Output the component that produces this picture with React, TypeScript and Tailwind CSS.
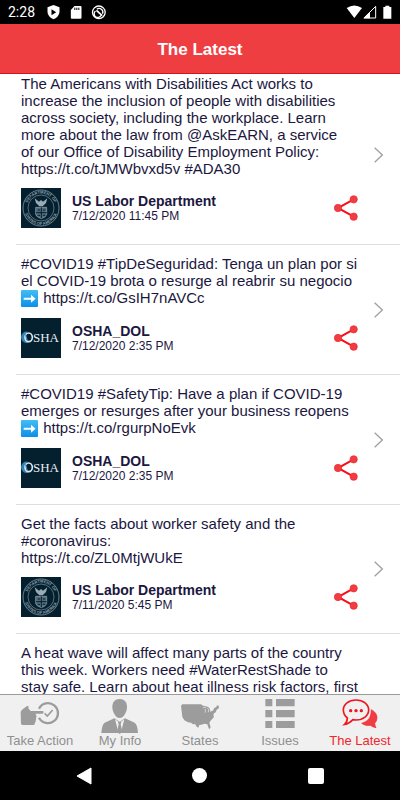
import React, { useState } from "react";

type Author = "dol" | "osha";

interface Post {
  id: number;
  text: string;
  link?: string;
  author?: Author;
  date?: string;
}

const posts: Post[] = [
  {
    id: 1,
    text: "The Americans with Disabilities Act works to increase the inclusion of people with disabilities across society, including the workplace. Learn more about the law from @AskEARN, a service\nof our Office of Disability Employment Policy: https://t.co/tJMWbvxd5v #ADA30",
    author: "dol",
    date: "7/12/2020 11:45 PM",
  },
  {
    id: 2,
    text: "#COVID19 #TipDeSeguridad: Tenga un plan por si el COVID-19 brota o resurge al reabrir su negocio",
    link: "https://t.co/GsIH7nAVCc",
    author: "osha",
    date: "7/12/2020 2:35 PM",
  },
  {
    id: 3,
    text: "#COVID19 #SafetyTip: Have a plan if COVID-19 emerges or resurges after your business reopens",
    link: "https://t.co/rgurpNoEvk",
    author: "osha",
    date: "7/12/2020 2:35 PM",
  },
  {
    id: 4,
    text: "Get the facts about worker safety and the #coronavirus:\nhttps://t.co/ZL0MtjWUkE",
    author: "dol",
    date: "7/11/2020 5:45 PM",
  },
  {
    id: 5,
    text: "A heat wave will affect many parts of the country this week. Workers need #WaterRestShade to\nstay safe. Learn about heat illness risk factors, first",
  },
];

const authorNames: Record<Author, string> = {
  dol: "US Labor Department",
  osha: "OSHA_DOL",
};

const DolSeal = () => (
  <svg viewBox="0 0 120 120" className="size-10 shrink-0" aria-hidden="true">
    <defs>
      <path id="sealTop" d="M17 60a43 43 0 0 1 86 0" />
      <path id="sealBottom" d="M9 60a51 51 0 0 0 102 0" />
    </defs>
    <rect width="120" height="120" fill="#04202f" />
    <g fill="none" stroke="#8195a3">
      <circle cx="60" cy="60" r="54" strokeWidth="2.5" />
      <circle cx="60" cy="60" r="39" strokeWidth="2" />
    </g>
    <g fill="#8fa1ad" fontFamily="Liberation Sans, sans-serif" fontSize="12" fontWeight="700">
      <text textAnchor="middle">
        <textPath href="#sealTop" startOffset="50%">DEPARTMENT OF</textPath>
      </text>
      <text textAnchor="middle">
        <textPath href="#sealBottom" startOffset="50%">STATES OF AMERICA</textPath>
      </text>
    </g>
    <path d="M41 31l13 10 6-5 6 5 13-10-4 14-10 10h-10l-10-10z" fill="#9aabb6" />
    <path d="M44 58h33v21q-2 9-16 13-15-4-17-13z" fill="#506a7a" stroke="#9aabb6" strokeWidth="2" />
    <path d="M61 58v33M45 74h32M50 66h7M66 66h7M50 82h7M66 82h7" stroke="#04202f" strokeWidth="3" fill="none" />
  </svg>
);

const OshaLogo = () => (
  <svg viewBox="0 0 120 120" className="size-10 shrink-0" aria-hidden="true">
    <rect width="120" height="120" fill="#04202f" />
    <path d="M20 41a17 17 0 1 0 2 33 21 21 0 0 1-2-33z" fill="#2f83b5" />
    <ellipse cx="23" cy="58" rx="11" ry="13" fill="none" stroke="#dbe6ed" strokeWidth="5" />
    <path d="M12 46l7 22" stroke="#5b9cc2" strokeWidth="3" />
    <text x="36" y="72" fill="#e8edf0" fontFamily="Liberation Serif, serif" fontSize="39">
      SHA
    </text>
  </svg>
);

const ArrowEmoji = () => (
  <svg viewBox="0 0 51 51" className="mr-px inline-block size-[17px] align-[-4px]" role="img" aria-label="right arrow">
    <defs>
      <linearGradient id="arrowBg" x1="0" y1="0" x2="0" y2="1">
        <stop offset="0" stopColor="#42bdf5" />
        <stop offset="1" stopColor="#0c8fe8" />
      </linearGradient>
    </defs>
    <rect width="51" height="51" rx="3" fill="url(#arrowBg)" />
    <path d="M8 23h22v-9l14 12-14 12v-9H8z" fill="#fff" />
  </svg>
);

const ShareIcon = () => (
  <svg viewBox="0 0 72 78" className="h-[26px] w-6" aria-hidden="true">
    <path d="M59 13L12 39l47 26" fill="none" stroke="#f80f19" strokeWidth="6" />
    <g fill="#ef3e42" stroke="#f5222c" strokeWidth="2">
      <circle cx="59" cy="13" r="11" />
      <circle cx="12" cy="39" r="11" />
      <circle cx="59" cy="65" r="11" />
    </g>
  </svg>
);

const TakeActionIcon = () => (
  <svg viewBox="60 24 120 108" className="h-9 w-10" aria-hidden="true">
    <path d="M117 56a30 30 0 1 1 0 27" fill="none" stroke="#9c9c9c" strokeWidth="7" />
    <path d="M134 70l8 8 16-18" fill="none" stroke="#9c9c9c" strokeWidth="5" />
    <path
      d="M62 66q1-5 7-9l11-8q5-3 6 1l-1 5 7 8h35q4 0 4 4t-4 4h-20l1 4q4 3 0 8q2 4-1 8q2 3-2 7q0 7-5 7H70q-7 0-7-4z"
      fill="#9c9c9c"
    />
  </svg>
);

const MyInfoIcon = () => (
  <svg viewBox="300 24 120 108" className="h-9 w-10" aria-hidden="true">
    <path
      d="M359 27c14 0 22 9 22 24 0 13-7 24-12 29q-10 8-20 0c-5-5-12-16-12-29 0-15 8-24 22-24z"
      fill="#9c9c9c"
    />
    <path d="M304 129q2-27 10-31l29-13 16 10 16-10 29 13q8 4 10 31z" fill="#9c9c9c" />
    <path d="M345 88l9 34 5-25 5 25 9-34-14 10z" fill="#f0f0f0" />
    <path d="M354 96h10l-2 7 5 22-8 7-8-7 5-22z" fill="#9c9c9c" />
  </svg>
);

const StatesIcon = () => (
  <svg viewBox="150 24 120 108" className="h-9 w-10" aria-hidden="true">
    <path
      d="M153 47l4-4h56l6 4 9 2 8 3 4 6 1 7 9-4 2-6 7-4 2-5 5 1 1 7-7 5-3 8-5 3-2 6 2 5-9 10-5 7 4 14-3 5-3-2-4-12-9-2-9 3-6 1-3 8-5-3-5-8-6 1-6-5-9-1-11-6-6-10-2-17z"
      fill="#9c9c9c"
    />
    <path d="M219 53l9-1M226 57v11M232 55l4 3-1 9" stroke="#f0f0f0" strokeWidth="2" fill="none" />
  </svg>
);

const IssuesIcon = () => (
  <svg viewBox="-15 24 120 108" className="h-9 w-10" aria-hidden="true">
    <g fill="#9c9c9c">
      <path d="M1 27h21v22H1zM1 60h21v22H1zM1 93h21v21H1z" />
      <path d="M33 27h56v22H33zM33 60h56v22H33zM33 93h56v21H33z" />
    </g>
  </svg>
);

const LatestIcon = () => (
  <svg viewBox="225 24 120 108" className="h-9 w-10" aria-hidden="true">
    <path
      d="M319 59q17 9 17 25 0 9-7 16 1 9 4 13-11-2-17-7-15 3-26-6 23-7 27-25 2-8 2-16z"
      fill="#ef3e42"
      stroke="#f5222c"
      strokeWidth="2"
    />
    <path
      d="M273 30c22 0 38 13 38 30s-16 30-38 30q-5 0-10-1-10 12-24 14 8-7 8-19-12-10-12-24c0-17 16-30 38-30z"
      fill="#f0f0f0"
      stroke="#f0151f"
      strokeWidth="5"
    />
    <g fill="#f0151f">
      <circle cx="257" cy="62" r="5" />
      <circle cx="273" cy="62" r="5" />
      <circle cx="289" cy="62" r="5" />
    </g>
  </svg>
);

const tabs = [
  { label: "Take Action", icon: <TakeActionIcon /> },
  { label: "My Info", icon: <MyInfoIcon /> },
  { label: "States", icon: <StatesIcon /> },
  { label: "Issues", icon: <IssuesIcon /> },
  { label: "The Latest", icon: <LatestIcon /> },
];

const StatusBar = () => (
  <div className="flex h-6 shrink-0 items-center bg-black px-2 text-white">
    <span className="font-[Roboto,sans-serif] text-sm">2:28</span>
    <svg viewBox="140 12 185 48" className="ml-[11px] h-4 w-[62px]" aria-hidden="true">
      <path d="M162 15l18 7v14q-1 15-18 22-17-7-18-22V22z" fill="#fff" />
      <path d="M156 28v18l14-9z" fill="#000" />
      <path d="M225 18h18q3 0 3 3v32q0 3-3 3h-26q-3 0-3-3V30z" fill="#fff" />
      <path d="M226 23v7M232 23v7M238 23v7" stroke="#000" strokeWidth="3" />
      <circle cx="298" cy="37" r="19" fill="none" stroke="#fff" strokeWidth="4" />
      <path d="M288 33a11 11 0 1 0 17 13M292 28a11 11 0 0 1 17 13" fill="none" stroke="#fff" strokeWidth="4" />
      <path d="M291 31l17 16" stroke="#fff" strokeWidth="5" />
    </svg>
    <svg viewBox="440 12 138 48" className="ml-auto h-4 w-[46px]" aria-hidden="true">
      <path d="M442 24q23-15 46 0l-23 30z" fill="#fff" />
      <path d="M529 19v35h-35z" fill="none" stroke="#fff" strokeWidth="3" />
      <path d="M492 55l20-20v20z" fill="#fff" />
      <path d="M558 17h12v4h6v35h-24V21h6z" fill="#fff" />
    </svg>
  </div>
);

const PostRow: React.FC<{ post: Post }> = ({ post }) => (
  <li className="flex items-center border-b border-[#dedede] pl-[5px] pr-4">
    <div className="min-w-0 flex-1 pt-2.5 pb-4">
      <p className="whitespace-pre-line text-[15px] leading-[17px]">
        {post.text}
        {post.link && (
          <span className="block leading-[18px]">
            <ArrowEmoji /> {post.link}
          </span>
        )}
      </p>
      {post.author && (
        <div className="mt-[11px] flex items-center pr-1.5">
          {post.author === "dol" ? <DolSeal /> : <OshaLogo />}
          <div className="ml-[11px] flex-1">
            <div className="text-sm leading-4 font-bold">{authorNames[post.author]}</div>
            <div className="text-xs leading-[14px]">{post.date}</div>
          </div>
          <button type="button" aria-label="Share">
            <ShareIcon />
          </button>
        </div>
      )}
    </div>
    <div className="ml-2.5 w-2.5 shrink-0">
      {post.author && (
        <svg viewBox="0 0 30 48" className="h-4 w-2.5" aria-hidden="true">
          <path d="M2 2l23 22L2 46" fill="none" stroke="#a0a0a0" strokeWidth="4" />
        </svg>
      )}
    </div>
  </li>
);

const App: React.FC = () => {
  const [activeTab, setActiveTab] = useState<string>("The Latest");

  return (
    <div className="flex h-screen flex-col bg-white font-['Liberation_Sans',Arial,sans-serif] text-[#1b1740]">
      <StatusBar />
      <header className="flex h-[50px] shrink-0 items-center justify-center border-b border-[#d3141a] bg-[#ef3e42] pt-0.5">
        <h1 className="text-[17px] font-bold text-white">{activeTab}</h1>
      </header>

      <main className="min-h-0 flex-1 overflow-y-auto [scrollbar-width:none]">
        <ul className="-mt-[9px] ml-4">
          {posts.map((post) => (
            <PostRow key={post.id} post={post} />
          ))}
        </ul>
      </main>

      <nav className="flex h-[57px] shrink-0 border-t border-[#9a9a9a] bg-[#f0f0f0]">
        {tabs.map((tab) => (
          <button
            key={tab.label}
            type="button"
            onClick={() => setActiveTab(tab.label)}
            className={`flex flex-1 flex-col items-center pt-[3px] text-[13px] leading-[14px] whitespace-nowrap ${
              activeTab === tab.label ? "text-[#f0262e]" : "text-[#8f8f8f]"
            }`}
          >
            {tab.icon}
            {tab.label}
          </button>
        ))}
      </nav>

      <div className="flex h-[49px] shrink-0 items-center justify-around bg-black px-[26px]">
        <button type="button" aria-label="Back">
          <svg viewBox="0 0 16 18" className="h-[18px] w-4" aria-hidden="true">
            <path d="M15 1v16L1 9z" fill="#fff" stroke="#fff" strokeLinejoin="round" />
          </svg>
        </button>
        <button type="button" aria-label="Home" className="size-[15px] rounded-full bg-white" />
        <button type="button" aria-label="Recent apps" className="size-4 rounded-xs bg-white" />
      </div>
    </div>
  );
};

export default App;
